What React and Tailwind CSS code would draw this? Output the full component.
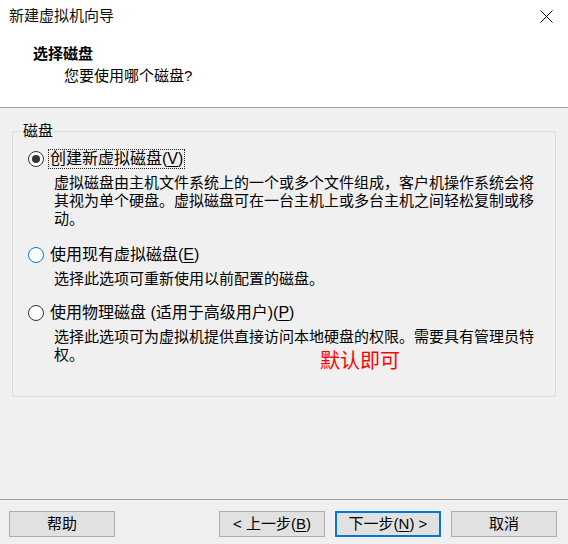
import React from 'react';

const FONT = { fontFamily: '"Liberation Sans", "Noto Sans CJK SC", sans-serif' };

const Radio = ({ checked, hover }) => (
  <span
    className={`relative inline-flex h-[16px] w-[16px] shrink-0 items-center justify-center rounded-full border bg-white ${
      hover ? 'border-[#0078d7]' : 'border-[#333333]'
    }`}
  >
    {checked && <span className="h-[8px] w-[8px] rounded-full bg-[#333333]" />}
  </span>
);

const Key = ({ children }) => <span className="underline underline-offset-2">{children}</span>;

const Option = ({ checked, hover, focus, label, lines, className }) => (
  <div className={className}>
    <div className="flex h-[20px] items-center pl-[15px]">
      <Radio checked={checked} hover={hover} />
      <span
        className={`ml-[4px] flex h-[20px] items-center px-[1px] leading-[20px] ${
          focus ? 'border border-dotted border-[#222]' : 'border border-transparent'
        }`}
      >
        {label}
      </span>
    </div>
    <div className="mt-[5px] pl-[41px] pr-[20px] text-[15px] leading-[18px] text-[#000]">
      {lines.map((l, i) => (
        <div key={i} className="whitespace-nowrap">{l}</div>
      ))}
    </div>
  </div>
);

const Button = ({ children, primary }) => (
  <button
    className={`flex h-[26px] w-[106px] items-center justify-center bg-[#e1e1e1] text-[15px] leading-[20px] text-black ${
      primary ? 'border-2 border-[#0078d7]' : 'border border-[#adadad]'
    }`}
  >
    {children}
  </button>
);

export default function App() {
  return (
    <div className="flex h-[544px] w-[568px] flex-col bg-[#f0f0f0] text-black" style={FONT}>
      {/* title + header */}
      <div className="h-[107px] bg-white">
        <div className="flex h-[32px] items-center justify-between pl-[9px] pr-[15px]">
          <span className="text-[15px] leading-[20px] text-[#111]">新建虚拟机向导</span>
          <svg width="13" height="13" viewBox="0 0 13 13" className="mt-[1px]">
            <path d="M0.5 0.5 L12.5 12.5 M12.5 0.5 L0.5 12.5" stroke="#000" strokeWidth="1" />
          </svg>
        </div>
        <div className="pl-[33px] pt-[12px] text-[15px] font-bold leading-[20px]">选择磁盘</div>
        <div className="pl-[64px] pt-[2px] text-[15px] leading-[20px]">您要使用哪个磁盘?</div>
      </div>
      <div className="h-px bg-[#a0a0a0]" />

      {/* body */}
      <div className="flex-1 px-[12px] pt-[23px]">
        <div className="relative h-[266px] border border-[#dcdcdc]">
          <span className="absolute left-[8px] top-[-11px] bg-[#f0f0f0] px-[2px] text-[15px] leading-[20px]">
            磁盘
          </span>

          <Option
            className="pt-[17px]"
            checked
            focus
            label={<>创建新虚拟磁盘(<Key>V</Key>)</>}
            lines={[
              '虚拟磁盘由主机文件系统上的一个或多个文件组成，客户机操作系统会将',
              '其视为单个硬盘。虚拟磁盘可在一台主机上或多台主机之间轻松复制或移',
              '动。',
            ]}
          />
          <Option
            className="mt-[17px]"
            hover
            label={<>使用现有虚拟磁盘(<Key>E</Key>)</>}
            lines={['选择此选项可重新使用以前配置的磁盘。']}
          />
          <Option
            className="mt-[15px]"
            label={<>使用物理磁盘 (适用于高级用户)(<Key>P</Key>)</>}
            lines={[
              '选择此选项可为虚拟机提供直接访问本地硬盘的权限。需要具有管理员特',
              '权。',
            ]}
          />

          <span className="absolute left-[307px] top-[217px] text-[20px] leading-[24px] text-[#ff0000]">
            默认即可
          </span>
        </div>
      </div>

      {/* footer */}
      <div className="h-px bg-[#a0a0a0]" />
      <div className="flex h-[44px] items-start justify-between pl-[9px] pr-[11px] pt-[11px]">
        <Button>帮助</Button>
        <div className="flex gap-[10px]">
          <Button>&lt; 上一步(<Key>B</Key>)</Button>
          <Button primary>下一步(<Key>N</Key>) &gt;</Button>
          <Button>取消</Button>
        </div>
      </div>
    </div>
  );
}
